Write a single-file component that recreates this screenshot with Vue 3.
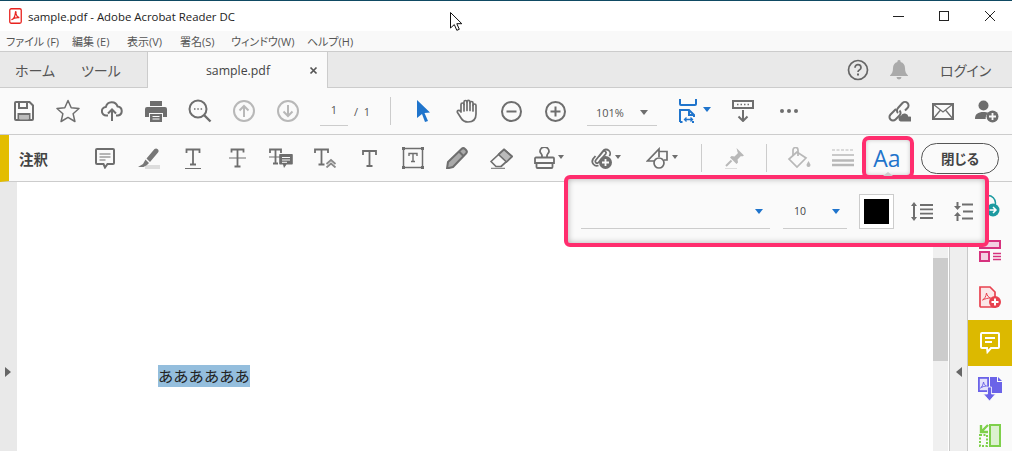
<template>
  <div class="app">
    <div class="desktop-line"></div>

    <div class="titlebar">
      <svg class="pdf-logo" width="13" height="16" viewBox="0 0 13 16">
        <rect x="0.75" y="0.75" width="11.5" height="14.5" rx="1.5" fill="#fff" stroke="#e8231f" stroke-width="1.3" />
        <path d="M2.5 11.8c2-1 3.6-3.6 3.8-6.6 0-1 .1-1.6.4-1.6.4 0 .4 1 .2 2 .4 2 1.6 3.4 3.4 4-2-.2-5.800.4-7.800 2.200z" fill="none" stroke="#e8231f" stroke-width="1.2" />
      </svg>
      <span class="title">sample.pdf - Adobe Acrobat Reader DC</span>
      <div class="window-controls">
        <svg width="12" height="12" viewBox="0 0 12 12"><path d="M1 6.500h11" stroke="#222" fill="none" /></svg>
        <svg width="12" height="12" viewBox="0 0 12 12"><rect x="1.500" y="1.500" width="9" height="9" stroke="#222" fill="none" /></svg>
        <svg width="12" height="12" viewBox="0 0 12 12"><path d="M1 1l10 10M11 1L1 11" stroke="#222" fill="none" /></svg>
      </div>
    </div>

    <div class="menubar">
      <span v-for="item in menus" :key="item.label" class="menu-item" :style="{ width: item.width + 'px' }">{{ item.label }}</span>
    </div>

    <div class="tabbar">
      <span class="tab-link home">ホーム</span>
      <span class="tab-link tools">ツール</span>
      <div class="doc-tab">
        <span class="doc-tab-name">sample.pdf</span>
        <svg class="doc-tab-close" width="9" height="9" viewBox="0 0 9 9"><path d="M1.500 1.500l6 6M7.500 1.500l-6 6" stroke="#555" stroke-width="1.700" fill="none" /></svg>
      </div>
      <div class="tab-right">
        <svg width="22" height="22" viewBox="0 0 22 22">
          <circle cx="11" cy="11" r="9.500" fill="none" stroke="#666" stroke-width="1.700" />
          <path d="M8 8.700c0-4 6-4 6 0 0 2.200-3 2.200-3 4.300" fill="none" stroke="#666" stroke-width="1.700" />
          <rect x="10" y="14.500" width="2" height="2" fill="#666" />
        </svg>
        <svg class="bell" width="18" height="20" viewBox="0 0 18 20">
          <path d="M9 0a1.500 1.500 0 0 1 1.500 2C13.500 2.700 15 5 15 8c0 4 1 5.500 3 7.500V16H0v-.5C2 13.500 3 12 3 8c0-3 1.500-5.300 4.500-6A1.500 1.500 0 0 1 9 0zM6.500 17h5a2.500 2.500 0 0 1-5 0z" fill="#aaa" />
        </svg>
        <span class="login">ログイン</span>
      </div>
    </div>

    <div class="toolbar">
      <div class="slot">
        <svg width="20" height="20" viewBox="0 0 20 20" fill="none" stroke="#6e6e6e" stroke-width="2">
          <path d="M1 2a1 1 0 0 1 1-1h13.500L19 4.500V18a1 1 0 0 1-1 1H2a1 1 0 0 1-1-1z" />
          <path d="M5 1v6h8V1M4.500 19v-6h11v6" />
          <rect x="5.500" y="14" width="9" height="4.500" fill="#bbb" stroke="none" />
        </svg>
      </div>
      <div class="slot">
        <svg width="24" height="24" viewBox="0 0 24 24" fill="none" stroke="#6e6e6e" stroke-width="1.500" stroke-linejoin="round">
          <path d="M12 1.500l3.200 7.200 7.800.8-5.900 5.200 1.800 7.800-6.900-4.100-6.900 4.100 1.800-7.800L1 9.500l7.800-.8z" />
        </svg>
      </div>
      <div class="slot">
        <svg width="22" height="22" viewBox="0 0 22 22" fill="none" stroke="#6e6e6e" stroke-width="2">
          <path d="M7 15.500H5.500a4.300 4.300 0 0 1-.6-8.600 6 6 0 0 1 11.600-.5 4.600 4.600 0 0 1 .5 9.100H15" />
          <path d="M11 21V10M7 13.500l4-4 4 4" />
        </svg>
      </div>
      <div class="slot">
        <svg width="22" height="21" viewBox="0 0 22 21">
          <path d="M5 0h12v5H5zM2 6h18a2 2 0 0 1 2 2v8h-4v-4H4v4H0V8a2 2 0 0 1 2-2zM5 13h12v8H5z" fill="#6e6e6e" />
          <path d="M7.500 15.500h7M7.500 18h7" stroke="#fafafa" />
        </svg>
      </div>
      <div class="slot">
        <svg width="24" height="24" viewBox="0 0 24 24" fill="none" stroke="#6e6e6e" stroke-width="2.400">
          <circle cx="10" cy="10" r="8.500" stroke-width="2" />
          <path d="M16 16l6.500 6.500" />
          <path d="M6 10h1.500M9.300 10h1.500M12.600 10h1.500" stroke-width="1.600" />
        </svg>
      </div>
      <div class="slot">
        <svg width="22" height="22" viewBox="0 0 22 22" fill="none" stroke="#b8b8b8" stroke-width="2">
          <circle cx="11" cy="11" r="10" />
          <path d="M11 17V6M6.500 10.500L11 6l4.500 4.500" />
        </svg>
      </div>
      <div class="slot">
        <svg width="22" height="22" viewBox="0 0 22 22" fill="none" stroke="#b8b8b8" stroke-width="2">
          <circle cx="11" cy="11" r="10" />
          <path d="M11 5v11M6.500 11.500L11 16l4.500-4.500" />
        </svg>
      </div>
      <div class="page-box">1</div>
      <span class="page-total">/&nbsp;&nbsp;1</span>
      <div class="divider main-divider"></div>
      <div class="slot">
        <svg width="13" height="22" viewBox="0 0 13 22"><path d="M0 0l13 12.500-5.500.5 3.500 8-3 1-3-8L0 18z" fill="#1f74cc" /></svg>
      </div>
      <div class="slot">
        <svg width="22" height="24" viewBox="0 0 22 24" fill="none" stroke="#6e6e6e" stroke-width="1.700" stroke-linecap="round" stroke-linejoin="round">
          <path d="M5 13V5.500a1.500 1.500 0 0 1 3 0V3a1.500 1.500 0 0 1 3 0v-.2a1.500 1.500 0 0 1 3 0V4a1.500 1.500 0 0 1 3 0v2.500a1.500 1.500 0 0 1 3 0V15c0 5-3 8-8 8-3.500 0-5.500-1.500-7-4l-3.500-5.500c-1-1.800 1.500-3 2.700-1.500z" />
          <path d="M8 5.500V12M11 3v8.500M14 3v8.500M17 6v6" />
        </svg>
      </div>
      <div class="slot">
        <svg width="21" height="21" viewBox="0 0 21 21" fill="none" stroke="#6e6e6e" stroke-width="2">
          <circle cx="10.500" cy="10.500" r="9.500" /><path d="M5.500 10.500h10" />
        </svg>
      </div>
      <div class="slot">
        <svg width="21" height="21" viewBox="0 0 21 21" fill="none" stroke="#6e6e6e" stroke-width="2">
          <circle cx="10.500" cy="10.500" r="9.500" /><path d="M5.500 10.500h10M10.500 5.500v10" />
        </svg>
      </div>
      <div class="zoom-box">
        <span>101%</span>
        <i class="caret gray"></i>
      </div>
      <div class="slot fit">
        <svg width="18" height="24" viewBox="0 0 18 24" fill="none" stroke="#1f74cc" stroke-width="2">
          <path d="M1 0v5a1 1 0 0 0 1 1h14a1 1 0 0 0 1-1V0" />
          <path d="M1 23V11h9l5 5v2M1 23h2.500M13 23h2" />
          <path d="M10 11v5h5" />
          <path d="M5.500 20.500h8M7.500 18.500l-2 2 2 2M11.500 18.500l2 2-2 2" stroke-width="1.300" />
        </svg>
        <i class="caret blue"></i>
      </div>
      <div class="slot dl">
        <svg width="22" height="22" viewBox="0 0 22 22" fill="none">
          <rect x="1" y="1" width="20" height="7" stroke="#6e6e6e" stroke-width="2" />
          <path d="M5 4.500h1.500M8.500 4.500h1.500M12 4.500h1.500M15.500 4.500h1.500" stroke="#6e6e6e" stroke-width="1.500" />
          <path d="M11 10v11M6.500 16.500L11 21l4.500-4.500" stroke="#6e6e6e" stroke-width="2" />
        </svg>
      </div>
      <div class="slot dots">
        <i></i><i></i><i></i>
      </div>
      <div class="toolbar-right">
        <div class="slot">
          <svg width="24" height="22" viewBox="0 0 24 22" fill="none" stroke="#6e6e6e" stroke-width="2">
            <path d="M9 9l-5.500 5.500a3.500 3.500 0 0 0 5 5l4-4a3.500 3.500 0 0 0 0-5" />
            <path d="M11 13a3.500 3.500 0 0 1 0-5l4.500-5a3.500 3.500 0 0 1 5 5L18 10.500" />
            <path d="M13.500 21.500a3 3 0 0 1 .5-5.800 4 4 0 0 1 7.500 1 2.500 2.500 0 0 1 2 4.800z" fill="#6e6e6e" stroke="none" />
          </svg>
        </div>
        <div class="slot">
          <svg width="22" height="17" viewBox="0 0 22 17" fill="none" stroke="#6e6e6e">
            <rect x="1" y="1" width="20" height="15" stroke-width="2" />
            <path d="M1 1l10 8 10-8M1 16l7.500-9M21 16l-7.500-9" stroke-width="1.300" />
          </svg>
        </div>
        <div class="slot">
          <svg width="24" height="23" viewBox="0 0 24 23">
            <circle cx="8.500" cy="5.500" r="5" fill="#6e6e6e" />
            <path d="M0 19c0-5 3-7 8.500-7 2 0 3.500.3 4.800.9A7 7 0 0 0 10.700 19z" fill="#6e6e6e" />
            <circle cx="17.500" cy="16.500" r="6" fill="#6e6e6e" />
            <path d="M17.500 13v7M14 16.500h7" stroke="#fafafa" stroke-width="1.800" />
          </svg>
        </div>
      </div>
    </div>

    <div class="annotbar">
      <div class="annot-label">注釈</div>
      <div class="slot">
        <svg width="20" height="21" viewBox="0 0 20 21" fill="none" stroke="#6e6e6e" stroke-width="2">
          <path d="M2 1h16a1 1 0 0 1 1 1v13a1 1 0 0 1-1 1h-5.500L10 19.500 8.500 16H2a1 1 0 0 1-1-1V2a1 1 0 0 1 1-1z" />
          <path d="M4.500 6h11M4.500 9h11M4.500 12h6" stroke-width="1.200" />
        </svg>
      </div>
      <div class="slot">
        <svg width="22" height="21" viewBox="0 0 22 21">
          <rect x="7" y="17" width="15" height="4" fill="#ddd" />
          <path d="M16.500 1a2.500 2.500 0 0 1 3.500 3.500L12 14l-3.500-3.500z" fill="#777" />
          <path d="M7.500 11.500L11 15l-2 2-3.500 2H0l5-3z" fill="#777" />
        </svg>
      </div>
      <div class="slot">
        <svg width="16" height="21" viewBox="0 0 16 21" fill="none" stroke="#6e6e6e">
          <path d="M1.500 5V1.500h13V5M8 1.500v15M5 16.500h6" stroke-width="1.800" />
          <path d="M0 20.500h16" />
        </svg>
      </div>
      <div class="slot">
        <svg width="17" height="20" viewBox="0 0 17 20" fill="none" stroke="#6e6e6e">
          <path d="M2.500 4.500V1.500h12v3M8.500 1.500v17M5.500 18.500h6" stroke-width="1.800" />
          <path d="M0 10h17" />
        </svg>
      </div>
      <div class="slot">
        <svg width="24" height="21" viewBox="0 0 24 21" fill="none" stroke="#6e6e6e">
          <path d="M1 5V1.500h11V5M6.500 1.500v14M4 15.500h5" stroke-width="1.800" />
          <path d="M0 9h11" />
          <path d="M11 6h12a.8.8 0 0 1 .8.8v9a.8.8 0 0 1-.8.8h-5.500L15 20l-1-3.400h-3a.8.8 0 0 1-.8-.8v-9A.8.8 0 0 1 11 6z" fill="#6e6e6e" stroke="none" />
          <path d="M13 9.500h8M13 12h8M13 14.300h5" stroke="#fafafa" />
        </svg>
      </div>
      <div class="slot">
        <svg width="23" height="20" viewBox="0 0 23 20" fill="none" stroke="#6e6e6e">
          <path d="M1 5V1.500h13V5M7.500 1.500v15M4.500 16.500h6" stroke-width="1.800" />
          <path d="M12.500 16l4.500-4 4.500 4M12.500 19.500l4.500-4 4.500 4" stroke-width="1.800" stroke="#8a8a8a" />
        </svg>
      </div>
      <div class="slot">
        <svg width="15" height="17" viewBox="0 0 15 17" fill="none" stroke="#6e6e6e" stroke-width="1.800">
          <path d="M1 5V1h13v4M7.500 1v15M4.500 16h6" />
        </svg>
      </div>
      <div class="slot">
        <svg width="22" height="22" viewBox="0 0 22 22" fill="none" stroke="#6e6e6e">
          <rect x="1.500" y="1.500" width="19" height="19" stroke-width="1.500" />
          <path d="M7 9V6.500h8V9M11 6.500v8M9 14.500h4" stroke-width="1.400" />
          <rect x="0" y="0" width="3" height="3" fill="#6e6e6e" stroke="none" />
          <rect x="19" y="0" width="3" height="3" fill="#6e6e6e" stroke="none" />
          <rect x="0" y="19" width="3" height="3" fill="#6e6e6e" stroke="none" />
          <rect x="19" y="19" width="3" height="3" fill="#6e6e6e" stroke="none" />
        </svg>
      </div>
      <div class="slot">
        <svg width="22" height="22" viewBox="0 0 22 22" fill="none" stroke="#6e6e6e" stroke-width="2" stroke-linejoin="round">
          <path d="M15.500 2a2.500 2.500 0 0 1 3.500 0l1 1a2.500 2.500 0 0 1 0 3.500L7 20l-6 1.500L2 15z" fill="#aaa" />
          <path d="M13 4.500l4.500 4.500" />
        </svg>
      </div>
      <div class="slot">
        <svg width="23" height="21" viewBox="0 0 23 21" fill="none" stroke="#6e6e6e" stroke-width="1.700" stroke-linejoin="round">
          <path d="M14 1.500L22 8.500 11 18.500H6l-5-5z" />
          <path d="M14 1.500L22 8.500 16.500 14 8.500 6.500z" fill="#bbb" />
          <path d="M1 20.300h14" stroke-width="1" />
        </svg>
      </div>
      <div class="slot caret-slot">
        <svg width="21" height="23" viewBox="0 0 21 23" fill="none" stroke="#6e6e6e" stroke-width="1.800">
          <path d="M8 10.500V8.500C8 7 6 6 6 4.500a4.500 4.500 0 0 1 9 0C15 6 13 7 13 8.500v2" />
          <path d="M2 10.500h17a1 1 0 0 1 1 1V16H1v-4.500a1 1 0 0 1 1-1z" />
          <path d="M2.500 16v4a1 1 0 0 0 1 1h14a1 1 0 0 0 1-1v-4" />
        </svg>
        <i class="caret gray"></i>
      </div>
      <div class="slot caret-slot">
        <svg width="22" height="22" viewBox="0 0 22 22" fill="none" stroke="#6e6e6e" stroke-width="1.800">
          <path d="M9 9.500L13 4.500a1.800 1.800 0 0 1 2.800 2.200L8.500 15.500a1.800 1.800 0 0 1-2.800-2.300L13 4a4 4 0 0 1 6.300 5M5.500 9L3 12a4.500 4.500 0 0 0 5.500 6.500" />
          <circle cx="15.500" cy="15.500" r="6.500" fill="#6e6e6e" stroke="none" />
          <path d="M15.500 12v7M12 15.500h7" stroke="#fafafa" stroke-width="1.800" />
        </svg>
        <i class="caret gray"></i>
      </div>
      <div class="slot caret-slot">
        <svg width="23" height="22" viewBox="0 0 23 22" fill="none" stroke="#6e6e6e" stroke-width="1.700">
          <path d="M8.500 14H1.500L13 2v8" />
          <path d="M13 4.500h8v8.500h-3" />
          <circle cx="13" cy="16" r="5" />
        </svg>
        <i class="caret gray"></i>
      </div>
      <div class="divider annot-divider"></div>
      <div class="slot">
        <svg width="22" height="22" viewBox="0 0 22 22">
          <path d="M13.500 1l7.500 7.500-2 1-1-.5-3.500 3.500.5 3-1.500 1.500L7 10.500 8.500 9l3 .5L15 6l-.5-1z" fill="#b8b8b8" />
          <path d="M8.500 13.500L3 19" stroke="#b8b8b8" stroke-width="2" />
          <path d="M2 21.500h12" stroke="#ddd" />
        </svg>
      </div>
      <div class="divider annot-divider second"></div>
      <div class="slot">
        <svg width="24" height="22" viewBox="0 0 24 22" fill="none" stroke="#b8b8b8" stroke-width="1.700">
          <path d="M10 5L2 12l8 8 9-9z" />
          <path d="M6 8V3a2.500 2.500 0 0 1 5 0v6" />
          <path d="M21.500 14c-1 2-2 3-2 4a2 2 0 0 0 4 0c0-1-1-2-2-4z" fill="#b8b8b8" stroke="none" />
        </svg>
      </div>
      <div class="slot">
        <svg width="22" height="18" viewBox="0 0 22 18" fill="none" stroke="#b8b8b8">
          <path d="M0 1h22" stroke-dasharray="3 1.500" />
          <path d="M0 6h22" stroke-width="1.500" />
          <path d="M0 11.500h22" stroke-width="2.500" />
          <path d="M0 16h22" stroke-width="2.500" />
        </svg>
      </div>
      <div class="slot aa">Aa</div>
      <button class="close-btn">閉じる</button>
    </div>

    <div class="body">
      <div class="left-strip"><i class="tri right"></i></div>
      <div class="doc">
        <span class="doc-text">ああああああ</span>
      </div>
      <div class="scroll"><div class="scroll-thumb"></div></div>
      <div class="panel-strip"><i class="tri left"></i></div>
      <div class="rail">
        <div class="rail-item">
          <svg width="20" height="24" viewBox="0 0 20 24" fill="none">
            <circle cx="8" cy="10" r="7.500" stroke="#1c9aa0" stroke-width="1.500" />
            <circle cx="13" cy="17" r="6.500" fill="#1c9aa0" />
            <path d="M9.500 17h6M13 14l3 3-3 3" stroke="#fff" stroke-width="1.500" />
          </svg>
        </div>
        <div class="rail-item">
          <svg width="22" height="22" viewBox="0 0 22 22" fill="none" stroke="#d6327e" stroke-width="2">
            <rect x="1" y="1" width="20" height="7" fill="#f3d0e2" />
            <rect x="1" y="12" width="9" height="9" fill="#f3d0e2" />
            <path d="M14 13.500h8M14 16.500h8M14 19.500h8" stroke-width="1.300" />
          </svg>
        </div>
        <div class="rail-item">
          <svg width="22" height="22" viewBox="0 0 22 22" fill="none">
            <path d="M1 1h10l5 5v15H2a1 1 0 0 1-1-1z" stroke="#e8414f" stroke-width="1.700" fill="#fbe6e7" />
            <path d="M3.500 14c2-1 3.500-3.500 4-7 .500 2.500 2 4.500 4 5-2.500 0-6 1-8 2z" stroke="#e8414f" />
            <circle cx="16" cy="16" r="6" fill="#e8414f" />
            <path d="M16 12.500v7M12.500 16h7" stroke="#fff" stroke-width="2" />
          </svg>
        </div>
        <div class="rail-item active">
          <svg width="20" height="22" viewBox="0 0 20 22" fill="none" stroke="#fff" stroke-width="2">
            <path d="M2 1h16a1 1 0 0 1 1 1v13a1 1 0 0 1-1 1H11l-3.500 4-.5-4H2a1 1 0 0 1-1-1V2a1 1 0 0 1 1-1z" />
            <path d="M5 6h10M5 10h7" stroke-width="2" />
          </svg>
        </div>
        <div class="rail-item">
          <svg width="24" height="24" viewBox="0 0 24 24">
            <path d="M0 0h11v15H0z" fill="#6b63e8" />
            <path d="M1.800 1.800h7.400v11.400H1.800z" fill="#e4e2fb" />
            <path d="M2.500 11c1.500-1 2.500-3 3-6 .5 2 1.500 3.500 3 4-2 0-4.500 1-6 2z" fill="none" stroke="#6b63e8" />
            <path d="M12 0h7v5h5v11H12z" fill="#6b63e8" />
            <path d="M20 0l4 4h-4z" fill="#6b63e8" />
            <path d="M9.500 10h4v7h4L11.500 24l-6-7h4z" fill="#6b63e8" stroke="#fafafa" stroke-width=".8" />
          </svg>
        </div>
        <div class="rail-item">
          <svg width="22" height="23" viewBox="0 0 22 23" fill="none" stroke="#7ed04b" stroke-width="2">
            <rect x="11" y="1" width="10" height="21" fill="#dcf1cf" />
            <rect x="1" y="11" width="7" height="11" stroke-dasharray="2 1.500" />
            <path d="M2 1v7h7M2 8l7-7" stroke-width="2.400" />
          </svg>
        </div>
      </div>
    </div>

    <div class="popup">
      <div class="select font-select"><i class="caret blue"></i></div>
      <div class="select size-select"><span>10</span><i class="caret blue"></i></div>
      <div class="swatch"><div class="swatch-color"></div></div>
      <svg class="line-icon" width="22" height="19" viewBox="0 0 22 19" fill="none" stroke="#6e6e6e">
        <path d="M3 2v15" stroke-width="2" />
        <path d="M0 4l3-4 3 4zM0 15l3 4 3-4z" fill="#6e6e6e" stroke="none" />
        <path d="M9 3h13M9 7.300h13M9 11.600h13M9 16h13" stroke-width="1.800" />
      </svg>
      <svg class="para-icon" width="19" height="19" viewBox="0 0 19 19" fill="none" stroke="#6e6e6e">
        <path d="M3.500 0v4M3.500 13v6" stroke-width="2" />
        <path d="M0 4h7L3.500 8zM0 14h7l-3.500-4z" fill="#6e6e6e" stroke="none" />
        <path d="M8 2.500h11M9 9.500h10M8 16.500h11" stroke-width="1.800" />
      </svg>
    </div>

    <div class="aa-highlight"></div>

    <svg class="cursor" width="12" height="19" viewBox="0 0 12 19">
      <path d="M.5.500v15.500l3.800-3.400 2.500 5.700 2.500-1-2.500-5.600h5z" fill="#fff" stroke="#111" />
    </svg>
  </div>
</template>

<script setup>
const menus = [
  { label: 'ファイル (F)', width: 66 },
  { label: '編集 (E)', width: 55 },
  { label: '表示(V)', width: 53 },
  { label: '署名(S)', width: 51 },
  { label: 'ウィンドウ(W)', width: 76 },
  { label: 'ヘルプ(H)', width: 50 }
]
</script>

<style>
html,
body {
  margin: 0;
  overflow: hidden;
}
</style>

<style scoped>
.app {
  position: relative;
  width: 1012px;
  height: 451px;
  overflow: hidden;
  display: flex;
  flex-direction: column;
  background: #fff;
  color: #444;
  font-family: "Open Sans", "Noto Sans CJK JP", sans-serif;
  font-feature-settings: "palt";
}

i {
  display: block;
}

.desktop-line {
  height: 1px;
  background: #0f4a63;
}

.titlebar {
  height: 30px;
  display: flex;
  align-items: center;
  padding-left: 9px;
  background: #fff;
}

.title {
  margin-left: 6px;
  font-size: 11.400px;
  color: #222;
}

.window-controls {
  margin-left: auto;
  display: flex;
  gap: 34px;
  padding-right: 16px;
}

.menubar {
  height: 20px;
  display: flex;
  align-items: center;
  padding-left: 6px;
  background: #f9f9f9;
  border-bottom: 1px solid #ccc;
  font-size: 11px;
  color: #555;
}

.menu-item {
  white-space: nowrap;
}

.tabbar {
  height: 35px;
  display: flex;
  align-items: center;
  background: #e9e9e9;
  border-bottom: 1px solid #ccc;
}

.tab-link {
  flex: none;
  font-size: 14px;
  color: #555;
}

.home {
  width: 66px;
  margin-left: 15px;
}

.tools {
  width: 66px;
}

.doc-tab {
  position: relative;
  align-self: stretch;
  width: 179px;
  margin-bottom: -1px;
  background: #fafafa;
  border-left: 1px solid #ccc;
  border-right: 1px solid #ccc;
  display: flex;
  align-items: center;
}

.doc-tab-name {
  margin-left: 58px;
  font-size: 12.300px;
  color: #444;
}

.doc-tab-close {
  margin-left: auto;
  margin-right: 9px;
}

.tab-right {
  margin-left: auto;
  display: flex;
  align-items: center;
  padding-right: 24px;
}

.bell {
  margin-left: 21px;
}

.login {
  width: 48px;
  margin-left: 32px;
  font-size: 14px;
  white-space: nowrap;
  color: #555;
}

.toolbar {
  height: 46px;
  display: flex;
  align-items: center;
  padding-left: 2px;
  background: #fafafa;
  border-bottom: 1px solid #ccc;
}

.slot {
  flex: none;
  width: 44px;
  height: 100%;
  display: flex;
  align-items: center;
  justify-content: center;
}

.page-box {
  width: 28px;
  height: 26px;
  margin: 3px 0 0 10px;
  border-bottom: 1px solid #ccc;
  box-sizing: border-box;
  text-align: center;
  font-size: 11px;
  line-height: 20px;
  color: #555;
}

.page-total {
  width: 26px;
  margin-left: 6px;
  font-size: 11px;
  color: #555;
}

.divider {
  flex: none;
  width: 1px;
  background: #ccc;
}

.main-divider {
  height: 28px;
  margin-left: 10px;
  margin-right: 10px;
}

.zoom-box {
  width: 70px;
  height: 26px;
  margin: 3px 0 0 10px;
  border-bottom: 1px solid #ccc;
  box-sizing: border-box;
  display: flex;
  align-items: center;
  padding: 0 9px;
  font-size: 11px;
  color: #555;
}

.zoom-box .caret {
  margin-left: auto;
}

.caret {
  flex: none;
  width: 0;
  height: 0;
  border-left: 4px solid transparent;
  border-right: 4px solid transparent;
  border-top: 5px solid #6e6e6e;
}

.caret.blue {
  border-top-color: #1f74cc;
}

.caret-slot .caret {
  border-left-width: 3.500px;
  border-right-width: 3.500px;
  border-top-width: 4px;
  margin-top: -3px;
}

.fit {
  width: 54px;
  margin-left: 11px;
  justify-content: flex-start;
  padding-left: 11px;
  box-sizing: border-box;
  gap: 6px;
}

.fit .caret {
  margin-top: -4px;
}

.dl {
  margin-left: -1px;
}

.dots {
  margin-left: 2px;
  gap: 3px;
}

.dots i {
  width: 4px;
  height: 4px;
  border-radius: 50%;
  background: #6e6e6e;
}

.toolbar-right {
  margin-left: auto;
  display: flex;
  align-self: stretch;
  padding-right: 3px;
}

.annotbar {
  height: 46px;
  display: flex;
  align-items: center;
  background: #fafafa;
  border-left: 9px solid #e3bd00;
  border-bottom: 1px solid #ccc;
}

.annot-label {
  width: 74px;
  padding-left: 10px;
  box-sizing: border-box;
  font-size: 14.500px;
  font-weight: 700;
  color: #444;
}

.caret-slot {
  width: 56px;
  justify-content: flex-start;
  padding-left: 11px;
  box-sizing: border-box;
  gap: 3px;
}

.annot-divider {
  height: 28px;
  margin-left: 10px;
  margin-right: 10px;
}

.aa {
  font-family: "Open Sans", sans-serif;
  font-size: 23px;
  color: #1f74cc;
}

.close-btn {
  width: 78px;
  height: 31px;
  margin-left: 12px;
  padding: 0;
  background: #fafafa;
  border: 1px solid #555;
  border-radius: 16px;
  font-family: "Noto Sans CJK JP", sans-serif;
  font-feature-settings: "palt";
  font-size: 13.500px;
  font-weight: 700;
  color: #444;
}

.body {
  flex: 1;
  min-height: 0;
  display: flex;
}

.left-strip {
  flex: none;
  width: 17px;
  background: #e9e9e9;
  padding: 185px 0 0 5px;
  box-sizing: border-box;
}

.tri {
  width: 0;
  height: 0;
  border-top: 5px solid transparent;
  border-bottom: 5px solid transparent;
}

.tri.right {
  border-left: 6px solid #666;
}

.tri.left {
  border-right: 6px solid #666;
}

.doc {
  flex: 1;
  padding: 183px 0 0 141px;
  box-sizing: border-box;
  background: #fff;
}

.doc-text {
  display: inline-block;
  width: 92px;
  height: 22px;
  background: #94bedd;
  font-family: "Noto Sans CJK JP", serif;
  font-feature-settings: normal;
  font-size: 15.300px;
  line-height: 20px;
  color: #222;
  white-space: nowrap;
}

.scroll {
  flex: none;
  width: 15px;
  padding-top: 76px;
  margin-right: 1px;
  background: #f0f0f0;
}

.scroll-thumb {
  height: 103px;
  background: #ccc;
}

.panel-strip {
  flex: none;
  width: 19px;
  padding: 185px 0 0 6px;
  box-sizing: border-box;
  background: #eee;
  border-left: 1px solid #c8c8c8;
  border-right: 1px solid #c8c8c8;
}

.rail {
  flex: none;
  width: 44px;
  background: #fafafa;
}

.rail-item {
  height: 46px;
  display: flex;
  align-items: center;
  justify-content: center;
}

.rail-item.active {
  background: #dcb900;
}

.popup {
  position: absolute;
  left: 564px;
  top: 175px;
  width: 425px;
  height: 72px;
  box-sizing: border-box;
  border: 4px solid #ff2d6e;
  border-radius: 6px;
  background: #fafafa;
  box-shadow: inset 0 0 6px rgba(0, 0, 0, 0.3);
  display: flex;
  align-items: center;
  padding: 0 0 0 13px;
}

.select {
  height: 34px;
  margin-top: 1px;
  border-bottom: 1px solid #ccc;
  box-sizing: border-box;
  display: flex;
  align-items: center;
  font-size: 10.500px;
  color: #444;
}

.font-select {
  width: 189px;
  justify-content: flex-end;
  padding-right: 7px;
}

.size-select {
  width: 64px;
  margin-left: 13px;
  padding-left: 11px;
}

.size-select .caret {
  margin-left: auto;
  margin-right: 7px;
}

.swatch {
  width: 35px;
  height: 35px;
  margin-left: 12px;
  box-sizing: border-box;
  border: 1px solid #ccc;
  padding: 4px;
  background: #fff;
}

.swatch-color {
  width: 25px;
  height: 25px;
  background: #000;
}

.line-icon {
  margin-left: 17px;
}

.para-icon {
  margin-left: 21px;
}

.aa-highlight {
  position: absolute;
  left: 862px;
  top: 136px;
  width: 52px;
  height: 43px;
  box-sizing: border-box;
  border: 4px solid #ff2d6e;
  border-radius: 7px;
  box-shadow: inset 0 0 4px rgba(0, 0, 0, 0.2);
}

.aa-highlight::after {
  content: "";
  position: absolute;
  left: 17px;
  bottom: -1px;
  border-left: 5px solid transparent;
  border-right: 5px solid transparent;
  border-bottom: 4px solid #ccc;
}

.cursor {
  position: absolute;
  left: 450px;
  top: 12px;
}
</style>
